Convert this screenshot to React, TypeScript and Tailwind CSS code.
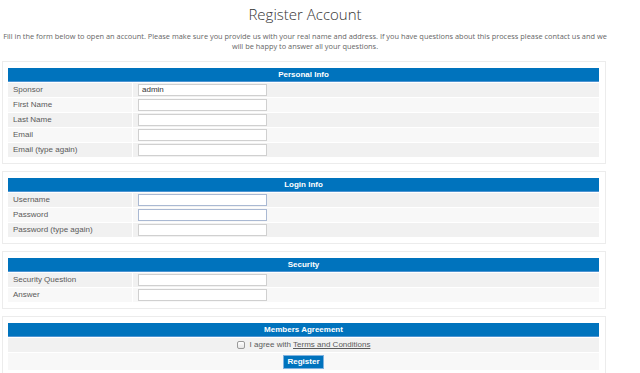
import React from "react";

const Row = ({ label, value, bg, blue }: { label: string; value?: string; bg: string; blue?: boolean }) => (
  <div className="flex gap-px mt-px h-[14px]">
    <div className={`w-[124px] ${bg} flex items-center pl-[5px] text-[8px] text-[#5a5a5a]`}>{label}</div>
    <div className={`flex-1 ${bg} flex items-center pl-[5px]`}>
      <div
        className={`w-[129px] h-[12px] bg-white border ${blue ? "border-[#aab9d3]" : "border-[#d0d0d0]"} flex items-center pl-[3px] text-[8px] text-[#333]`}
      >
        {value}
      </div>
    </div>
  </div>
);

const Panel = ({ title, children }: { title: string; children: React.ReactNode }) => (
  <div className="w-[604px] ml-[2px] border border-[#ececec] pl-[5px] pr-[6px] pt-[6px] pb-[6px] mb-[7px]">
    <div className="h-[14px] bg-[#0073bd] border-b border-[#4d94d2] flex items-center justify-center text-white font-bold text-[8px]">
      {title}
    </div>
    {children}
  </div>
);

export default function App() {
  const dark = "bg-[#f1f1f1]";
  const light = "bg-[#f8f8f8]";
  return (
    <div className="w-[640px] h-[373px] bg-white overflow-hidden" style={{ fontFamily: '"Liberation Sans", Arial, sans-serif' }}>
      <div className="w-[610px]">
        <div
          className="text-center pt-[4px] text-[15px] leading-[20px] text-[#333] font-light"
          style={{ fontFamily: '"Open Sans", sans-serif' }}
        >
          Register Account
        </div>
        <div
          className="text-center mt-[7px] text-[7.4px] leading-[10px] text-[#666]"
          style={{ fontFamily: '"Open Sans", sans-serif' }}
        >
          Fill in the form below to open an account. Please make sure you provide us with your real name and address. If you have questions about this process please contact us and we will be happy to answer all your questions.
        </div>
        <div className="mt-[10px]">
          <Panel title="Personal Info">
            <Row label="Sponsor" value="admin" bg={dark} />
            <Row label="First Name" bg={light} />
            <Row label="Last Name" bg={dark} />
            <Row label="Email" bg={light} />
            <Row label="Email (type again)" bg={dark} />
          </Panel>
          <Panel title="Login Info">
            <Row label="Username" bg={dark} blue />
            <Row label="Password" bg={light} blue />
            <Row label="Password (type again)" bg={dark} />
          </Panel>
          <Panel title="Security">
            <Row label="Security Question" bg={dark} />
            <Row label="Answer" bg={light} />
          </Panel>
          <Panel title="Members Agreement">
            <div className={`mt-px h-[14px] ${dark} flex items-center justify-center text-[8px] text-[#5a5a5a]`}>
              <span className="inline-block w-[8px] h-[8px] border border-[#9a9a9a] rounded-[2px] bg-gradient-to-b from-white to-[#e6e6e6] mr-[5px]" />
              <span>
                I agree with <span className="underline">Terms and Conditions</span>
              </span>
            </div>
            <div className={`mt-px h-[17px] ${light} flex items-center justify-center`}>
              <div className="w-[41px] h-[14px] bg-[#0073bd] border border-[#7fb2e0] flex items-center justify-center text-white font-bold text-[8px]">
                Register
              </div>
            </div>
          </Panel>
        </div>
      </div>
    </div>
  );
}
